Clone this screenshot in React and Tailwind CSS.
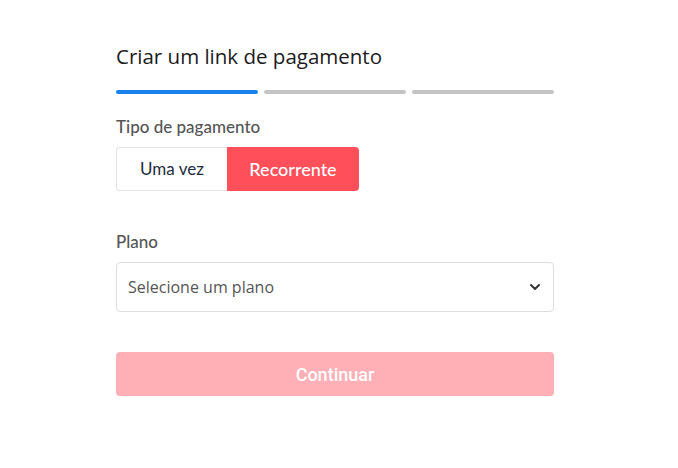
import { ChevronDown } from "lucide-react";

export default function App() {
  return (
    <div className="min-h-screen bg-white">
      <div className="w-[438px] ml-[116px] pt-[42px]">
        {/* Title */}
        <h1 className="text-[20.5px] leading-[28px] text-[#1b1b1b] font-['Open_Sans',sans-serif]">
          Criar um link de pagamento
        </h1>

        {/* Steps */}
        <div className="mt-[20px] flex gap-[6px]">
          <div className="h-[4px] flex-1 rounded-full bg-[#1a82f0]"></div>
          <div className="h-[4px] flex-1 rounded-full bg-[#c4c4c4]"></div>
          <div className="h-[4px] flex-1 rounded-full bg-[#c4c4c4]"></div>
        </div>

        {/* Payment type */}
        <div className="mt-[23px] text-[17px] leading-[20px] text-[#555] font-['Lato',sans-serif] font-medium">
          Tipo de pagamento
        </div>
        <div className="mt-[10px] flex font-['Lato',sans-serif] text-[17px]">
          <button className="w-[111px] h-[44px] border border-[#e3e3e3] border-r-0 rounded-l-[4px] text-[#1e2a3c] bg-white">
            Uma vez
          </button>
          <button className="w-[132px] h-[44px] rounded-r-[4px] bg-[#ff4f5a] text-white text-[18px] font-medium">
            Recorrente
          </button>
        </div>

        {/* Plan */}
        <div className="mt-[41px] text-[17px] leading-[20px] text-[#555] font-['Lato',sans-serif] font-medium">
          Plano
        </div>
        <div className="mt-[10px] h-[50px] border border-[#dedede] rounded-[4px] flex items-center justify-between pl-[11px] pr-[10px]">
          <span className="text-[16px] text-[#555] font-['Open_Sans',sans-serif]">Selecione um plano</span>
          <ChevronDown className="w-[16px] h-[16px] text-[#333]" strokeWidth={3} />
        </div>

        {/* Continue */}
        <button className="mt-[40px] w-full h-[44px] rounded-[4px] bg-[#feb0b6] text-white text-[18px] font-medium font-['Roboto',sans-serif]">
          Continuar
        </button>
      </div>
    </div>
  );
}
